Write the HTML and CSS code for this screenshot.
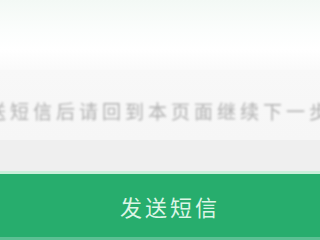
FILE: index.html
```html
<!DOCTYPE html>
<html lang="zh-CN">
<head>
    <meta charset="UTF-8">
    <meta name="viewport" content="width=device-width, initial-scale=1.0">
    <title>发送短信</title>
    <link rel="stylesheet" href="styles.css">
</head>
<body>
    <div class="page">
        <div class="top"></div>
        <div class="tip">
            <p class="tip-text">发送短信后请回到本页面继续下一步</p>
        </div>
        <div class="band"></div>
        <button class="send-btn">发送短信</button>
    </div>
</body>
</html>
```

FILE: styles.css
```css
body {
    margin: 0;
    font-family: "Noto Sans CJK SC", "Noto Sans", sans-serif;
    background-color: #ffffff;
}
.page {
    width: 320px;
    height: 240px;
    overflow: hidden;
    display: flex;
    flex-direction: column;
}
.top {
    height: 70px;
    background: linear-gradient(to bottom, #f3f9f5 0, #fbfdfc 30px, #ffffff 50px, #fafafa 70px);
}
.tip {
    height: 70px;
    box-sizing: border-box;
    padding-top: 10px;
    background: linear-gradient(to bottom, #f8f8f8, #f6f6f6);
    display: flex;
    align-items: center;
    overflow: hidden;
}
.tip-text {
    margin: 0 0 0 -36px;
    white-space: nowrap;
    font-size: 19px;
    letter-spacing: 4px;
    color: #b0b0b0;
    filter: blur(0.9px);
}
.band {
    height: 31px;
    background-color: #efefef;
    border-bottom: 3px solid #c9efd9;
}
.send-btn {
    height: 66px;
    border: none;
    border-bottom: 3px solid #5cc093;
    background-color: #27ad6d;
    color: #dcf5e6;
    font-family: inherit;
    font-size: 22px;
    letter-spacing: 3px;
    padding: 0 0 0 20px;
}
```
